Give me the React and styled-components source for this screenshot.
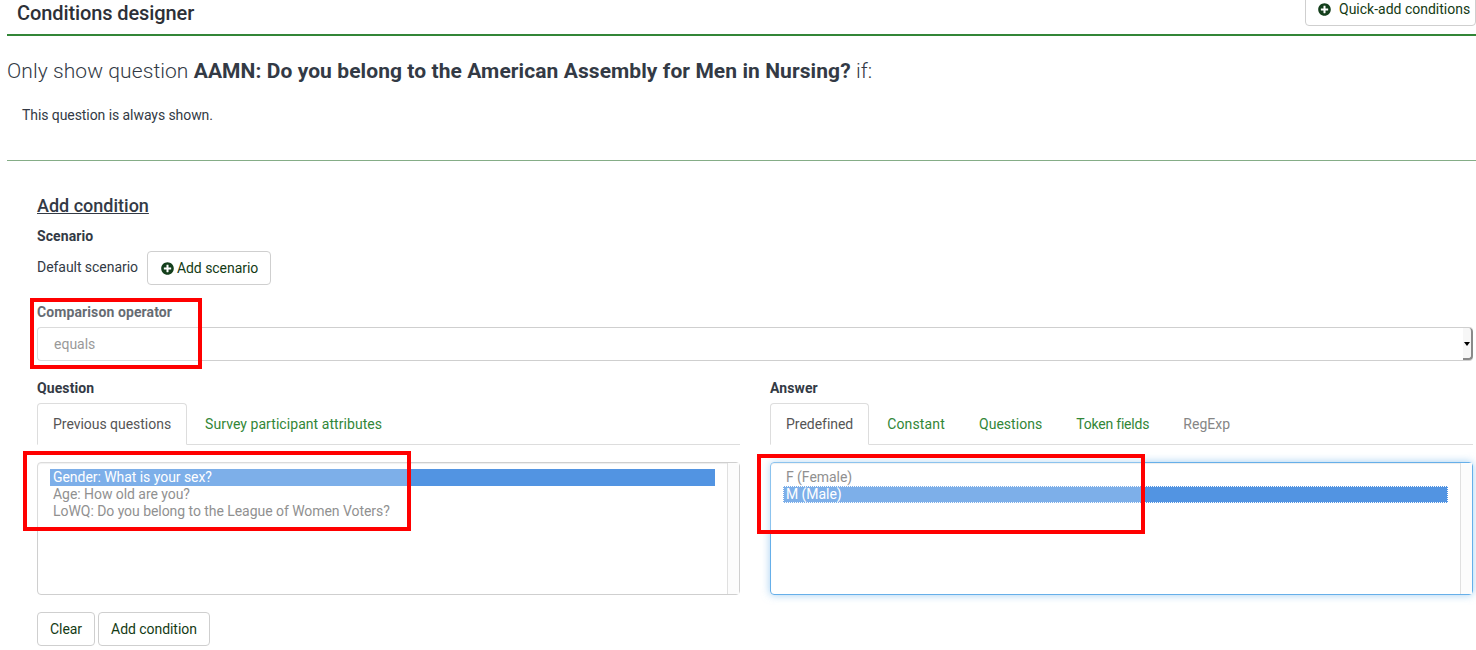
import React from "react";
import styled, { createGlobalStyle } from "styled-components";
import { FaPlusCircle } from "react-icons/fa";

const GlobalStyle = createGlobalStyle`
  html, body {
    margin: 0;
    padding: 0;
    background: #fff;
    overflow: hidden;
  }
  body {
    font-family: Roboto, "Liberation Sans", sans-serif;
    font-size: 14px;
    line-height: 20px;
    color: #333a45;
  }
  * { box-sizing: border-box; }
`;

const Page = styled.div`
  position: relative;
  width: 1476px;
  height: 650px;
  padding-left: 7px;
  overflow: hidden;
`;

const TitleBar = styled.div`
  display: flex;
  justify-content: space-between;
  align-items: flex-start;
  height: 36px;
  border-bottom: 2px solid #328637;
`;

const Title = styled.h3`
  margin: 3px 0 0 10px;
  font-size: 20px;
  line-height: 20px;
  font-weight: 500;
  letter-spacing: -0.1px;
  color: #2d3037;
`;

const Button = styled.button`
  display: inline-flex;
  align-items: center;
  height: 34px;
  padding: 0 12px;
  background: #fff;
  border: 1px solid #cfcfcf;
  border-radius: 4px;
  font: 400 14px/20px Roboto, sans-serif;
  letter-spacing: -0.05px;
  color: #143a14;
`;

const QuickAdd = styled(Button)`
  margin-top: -8px;
  padding: 0 5px 0 12px;
  width: 171px;
  gap: 8px;
  flex: none;
  white-space: nowrap;
  letter-spacing: 0;
`;

const PlusIcon = styled(FaPlusCircle)`
  width: 13px;
  height: 13px;
  color: #143f1c;
  flex: none;
`;

const QuestionHeading = styled.h4`
  margin: 23px 0 0;
  font-size: 21px;
  line-height: 24px;
  font-weight: 300;
  letter-spacing: 0.08px;
  color: #333a45;

  strong {
    font-weight: 700;
  }
`;

const Notice = styled.p`
  margin: 22px 0 0 15px;
  line-height: 20px;
  letter-spacing: -0.07px;
`;

const Divider = styled.hr`
  margin: 35px 0 0;
  border: 0;
  border-top: 1px solid #85ad87;
`;

const Form = styled.div`
  padding: 34px 3px 0 30px;
`;

const SectionTitle = styled.h4`
  margin: 0;
  font-size: 18px;
  line-height: 22px;
  font-weight: 500;
  text-decoration: underline;
  color: #333a45;
`;

const Label = styled.label`
  display: block;
  font-weight: 700;
  line-height: 20px;
  letter-spacing: 0.1px;
`;

const ScenarioLabel = styled(Label)`
  margin-top: 9px;
`;

const ScenarioRow = styled.div`
  display: flex;
  align-items: center;
  gap: 9px;
  margin-top: 5px;
`;

const ScenarioName = styled.span`
  margin-top: -2px;
  letter-spacing: -0.05px;
`;

const AddScenario = styled(Button)`
  gap: 3px;
  padding-left: 13px;
`;

const OperatorLabel = styled(Label)`
  margin-top: 17px;
`;

const SelectBox = styled.div`
  display: flex;
  align-items: center;
  justify-content: space-between;
  height: 34px;
  margin-top: 5px;
  padding-left: 16px;
  border: 1px solid #cfcfcf;
  border-right: 0;
  border-radius: 4px;
  color: #777;
`;

const Spinner = styled.div`
  display: flex;
  align-items: center;
  justify-content: center;
  width: 10px;
  height: 100%;
  background: #f7f7f7;
  border-right: 2px solid #8a8a8a;
  border-bottom: 2px solid #8a8a8a;
  border-radius: 0 4px 4px 0;
`;

const Arrow = styled.svg`
  width: 6px;
  height: 4px;
  margin-top: 2px;
  fill: #000;
`;

const Columns = styled.div`
  display: grid;
  grid-template-columns: 703px 703px;
  column-gap: 30px;
  margin-top: 17px;
`;

const Column = styled.div`
  min-width: 0;
`;

const Tabs = styled.div`
  display: flex;
  height: 42px;
  margin-top: 5px;
  border-bottom: 1px solid #ddd;
`;

const Tab = styled.div`
  height: 42px;
  margin-right: 2px;
  padding: 10px 15px;
  border: 1px solid ${(p) => (p.$active ? "#ddd" : "transparent")};
  border-bottom-color: ${(p) => (p.$active ? "#fff" : "transparent")};
  border-radius: 4px 4px 0 0;
  background: ${(p) => (p.$active ? "#fff" : "transparent")};
  white-space: nowrap;
  letter-spacing: ${(p) => p.$spacing ?? -0.03}px;
  color: ${(p) => (p.$active ? "#555" : p.$disabled ? "#868686" : "#328637")};
`;

const ListBox = styled.div`
  display: flex;
  height: 133px;
  margin-top: 17px;
  border: 1px solid ${(p) => (p.$focused ? "#66afe9" : "#cfcfcf")};
  border-radius: 4px;
  box-shadow: ${(p) =>
    p.$focused
      ? "inset 0 1px 1px rgba(0,0,0,.075), 0 0 8px rgba(102,175,233,.6)"
      : "inset 0 1px 1px rgba(0,0,0,.075)"};
`;

const Options = styled.div`
  flex: 1;
  min-width: 0;
  padding: 6px 12px;
`;

const Option = styled.div`
  height: 17px;
  padding-left: 3px;
  font-size: 14px;
  line-height: 17px;
  letter-spacing: -0.05px;
  white-space: nowrap;
  color: ${(p) => (p.$selected ? "#fff" : "#6b6b6b")};
  background: ${(p) => (p.$selected ? "#5294e2" : "transparent")};
  outline: ${(p) => (p.$dotted ? "1px dotted #fff" : "none")};
  outline-offset: -1px;
`;

const Gutter = styled.div`
  flex: none;
  width: 12px;
  background: #fcfcfc;
  border-left: 1px solid #e0e0e0;
`;

const Actions = styled.div`
  display: flex;
  gap: 3px;
  margin-top: 17px;
`;

const Callout = styled.div`
  position: absolute;
  left: ${(p) => p.$x}px;
  top: ${(p) => p.$y}px;
  width: ${(p) => p.$w}px;
  height: ${(p) => p.$h}px;
  border: 4px solid #ff0000;
  background: rgba(255, 255, 255, 0.25);
`;

const App = () => (
  <Page>
    <GlobalStyle />
    <TitleBar>
      <Title>Conditions designer</Title>
      <QuickAdd>
        <PlusIcon />
        Quick-add conditions
      </QuickAdd>
    </TitleBar>
    <QuestionHeading>
      Only show question <strong>AAMN: Do you belong to the American Assembly for Men in Nursing?</strong> if:
    </QuestionHeading>
    <Notice>This question is always shown.</Notice>
    <Divider />
    <Form>
      <SectionTitle>Add condition</SectionTitle>
      <ScenarioLabel>Scenario</ScenarioLabel>
      <ScenarioRow>
        <ScenarioName>Default scenario</ScenarioName>
        <AddScenario>
          <PlusIcon />
          Add scenario
        </AddScenario>
      </ScenarioRow>
      <OperatorLabel>Comparison operator</OperatorLabel>
      <SelectBox>
        equals
        <Spinner>
          <Arrow viewBox="0 0 6 4">
            <path d="M0 0h6L3 4z" />
          </Arrow>
        </Spinner>
      </SelectBox>
      <Columns>
        <Column>
          <Label>Question</Label>
          <Tabs>
            <Tab $active>Previous questions</Tab>
            <Tab $spacing={0.06}>Survey participant attributes</Tab>
          </Tabs>
          <ListBox>
            <Options>
              <Option $selected>Gender: What is your sex?</Option>
              <Option>Age: How old are you?</Option>
              <Option>LoWQ: Do you belong to the League of Women Voters?</Option>
            </Options>
            <Gutter />
          </ListBox>
        </Column>
        <Column>
          <Label>Answer</Label>
          <Tabs>
            <Tab $active>Predefined</Tab>
            <Tab $spacing={0.15}>Constant</Tab>
            <Tab $spacing={0.03}>Questions</Tab>
            <Tab $spacing={-0.2}>Token fields</Tab>
            <Tab $spacing={0.03} $disabled>RegExp</Tab>
          </Tabs>
          <ListBox $focused>
            <Options>
              <Option>F (Female)</Option>
              <Option $selected $dotted>M (Male)</Option>
            </Options>
            <Gutter />
          </ListBox>
        </Column>
      </Columns>
      <Actions>
        <Button>Clear</Button>
        <Button>Add condition</Button>
      </Actions>
    </Form>
    <Callout $x={30} $y={298} $w={172} $h={71} />
    <Callout $x={23} $y={451} $w={388} $h={80} />
    <Callout $x={757} $y={454} $w={388} $h={80} />
  </Page>
);

export default App;
